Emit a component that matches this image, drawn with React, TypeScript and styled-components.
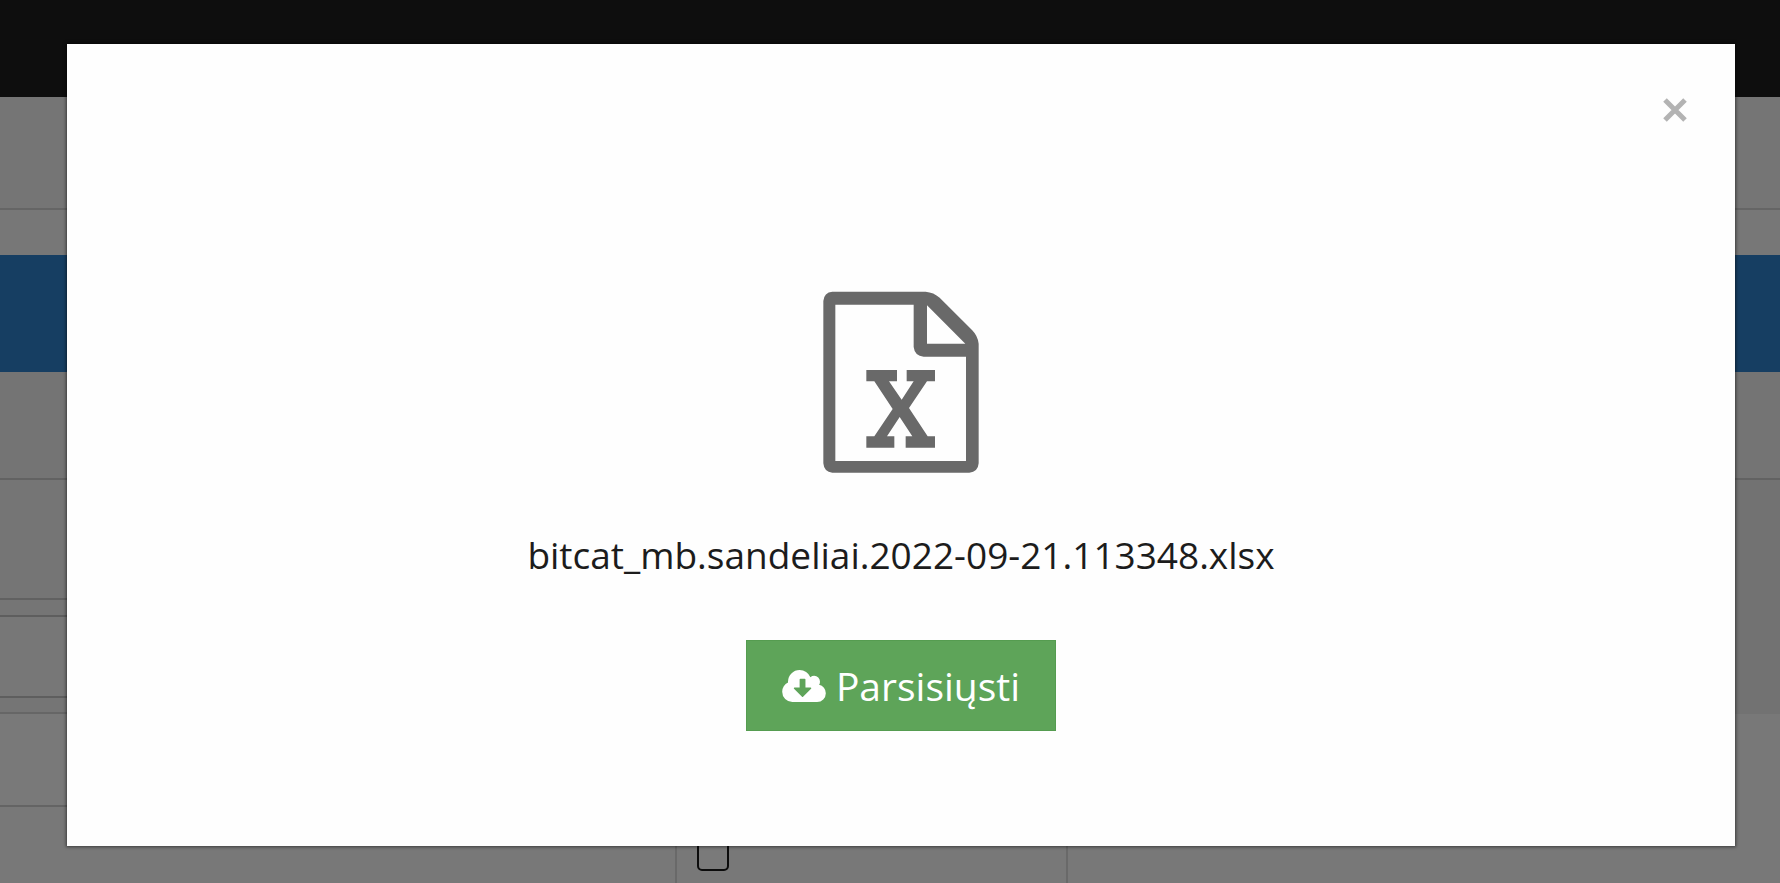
import React from 'react';
import styled, { createGlobalStyle } from 'styled-components';

const GlobalStyle = createGlobalStyle`
  *, *::before, *::after { box-sizing: border-box; }
  html, body, #root { height: 100%; }
  body {
    margin: 0;
    overflow: hidden;
    background: #787878;
    font-family: 'Open Sans', sans-serif;
  }
`;

const Page = styled.div`
  position: relative;
  display: flex;
  flex-direction: column;
  min-height: 100%;
`;

const TopBar = styled.header`
  height: 97px;
  background: #0e0e0e;
`;

const Band = styled.div<{ $height: number; $tone?: string; $line?: string }>`
  height: ${(p) => p.$height}px;
  background: ${(p) => p.$tone ?? '#757575'};
  border-bottom: ${(p) => (p.$line ? `2px solid ${p.$line}` : '0')};
`;

const Columns = styled.div`
  display: flex;
  flex: 1;
`;

const MainColumn = styled.div`
  display: flex;
  flex: 1;
  flex-direction: column;
`;

const SideColumn = styled.div`
  width: 200px;
`;

const TableRow = styled.div`
  display: grid;
  grid-template-columns: 677fr 391fr 512fr;
  flex: 1;
`;

const Cell = styled.div`
  padding: 32px 20px 0;
  border-right: 2px solid #696969;

  &:last-child { border-right: 0; }
`;

const RowCheckbox = styled.input`
  appearance: none;
  display: block;
  width: 32px;
  height: 32px;
  margin: 0;
  border: 2px solid #0c0c0c;
  border-radius: 5px;
  background: #7a7a7a;
`;

const Overlay = styled.div`
  position: absolute;
  inset: 0;
  padding: 44px 45px 37px 67px;
`;

const Dialog = styled.section`
  position: relative;
  display: flex;
  flex-direction: column;
  align-items: center;
  height: 100%;
  padding-top: 247px;
  background: #fefefe;
  box-shadow: 0 0 3px 1px rgba(0, 0, 0, 0.5);
`;

const CloseButton = styled.button`
  position: absolute;
  top: 44px;
  right: 40px;
  display: flex;
  align-items: center;
  justify-content: center;
  width: 40px;
  height: 44px;
  padding: 0;
  border: 0;
  background: transparent;
  color: #b3b3b3;
  cursor: pointer;
`;

const FileIcon = styled.svg`
  display: block;
  width: 156px;
  height: 182px;
  color: #696969;
`;

const FileName = styled.p`
  margin: 56px 0 59px;
  color: #1c1c1c;
  font-size: 37px;
  line-height: 52px;
`;

const DownloadButton = styled.button`
  display: flex;
  align-items: center;
  justify-content: center;
  gap: 10px;
  height: 91px;
  padding: 0 35px;
  border: 1px solid #559c50;
  background: #5ea459;
  color: #fff;
  font-family: inherit;
  font-size: 39px;
  line-height: 52px;
  cursor: pointer;
`;

const CloudIcon = styled.svg`
  display: block;
  width: 44px;
  height: 32px;
`;

export default function App() {
  return (
    <>
      <GlobalStyle />
      <Page>
        <TopBar />
        <Band $height={113} $line="#656565" />
        <Band $height={45} $tone="#777777" />
        <Band $height={117} $tone="#163e62" />
        <Band $height={108} $tone="#747474" $line="#626262" />
        <Columns>
          <MainColumn>
            <Band $height={120} $line="#616161" />
            <Band $height={17} $line="#5e5e5e" />
            <Band $height={81} $tone="#777777" $line="#5e5e5e" />
            <Band $height={16} $line="#666666" />
            <Band $height={93} $tone="#797979" $line="#646464" />
            <TableRow>
              <Cell />
              <Cell>
                <RowCheckbox type="checkbox" aria-label="Pasirinkti" />
              </Cell>
              <Cell />
            </TableRow>
          </MainColumn>
          <SideColumn>
            <Band $height={234} $tone="#727272" />
          </SideColumn>
        </Columns>
        <Overlay>
          <Dialog role="dialog" aria-modal="true" aria-labelledby="file-name">
            <CloseButton type="button" aria-label="Uždaryti">
              <svg width="24" height="24" viewBox="0 0 24 24" aria-hidden="true">
                <path d="M2 2L22 22M22 2L2 22" stroke="currentColor" strokeWidth="5" />
              </svg>
            </CloseButton>
            <FileIcon viewBox="0 0 468 546" fill="currentColor" aria-hidden="true">
              <path
                fillRule="evenodd"
                d="M28 2H308Q332 4 350 20L447 117Q464 134 467 158V517Q465 543 439 545H28Q3 543 1 517V30Q3 4 28 2ZM37 41V510H429V197H302Q275 195 272 168V41ZM312 43V158H427Z"
              />
              <path d="M130 237H222V271H198L236 326L272 271H251V237H336V271H312L258 351L314 436H336V470H248V436H268L230 378L192 436H214V470H130V436H154L209 354L154 271H130Z" />
            </FileIcon>
            <FileName id="file-name">bitcat_mb.sandeliai.2022-09-21.113348.xlsx</FileName>
            <DownloadButton type="button">
              <CloudIcon viewBox="0 128 1920 1408" fill="currentColor" aria-hidden="true">
                <path d="M1280 928q0-14-9-23t-23-9h-224v-352q0-13-9.5-22.5t-22.5-9.5h-192q-13 0-22.5 9.5t-9.5 22.5v352h-224q-13 0-22.5 9.5t-9.5 22.5q0 14 9 23l352 352q9 9 23 9t23-9l351-351q10-12 10-24zM1920 1152q0 159-112.5 271.5t-271.5 112.5h-1088q-185 0-316.5-131.5t-131.5-316.5q0-130 70-240t188-165q-2-30-2-43 0-212 150-362t362-150q156 0 285.5 87t188.5 231q71-62 166-62 106 0 181 75t75 181q0 76-41 138 130 31 213.5 135.5t83.5 238.5z" />
              </CloudIcon>
              Parsisiųsti
            </DownloadButton>
          </Dialog>
        </Overlay>
      </Page>
    </>
  );
}
